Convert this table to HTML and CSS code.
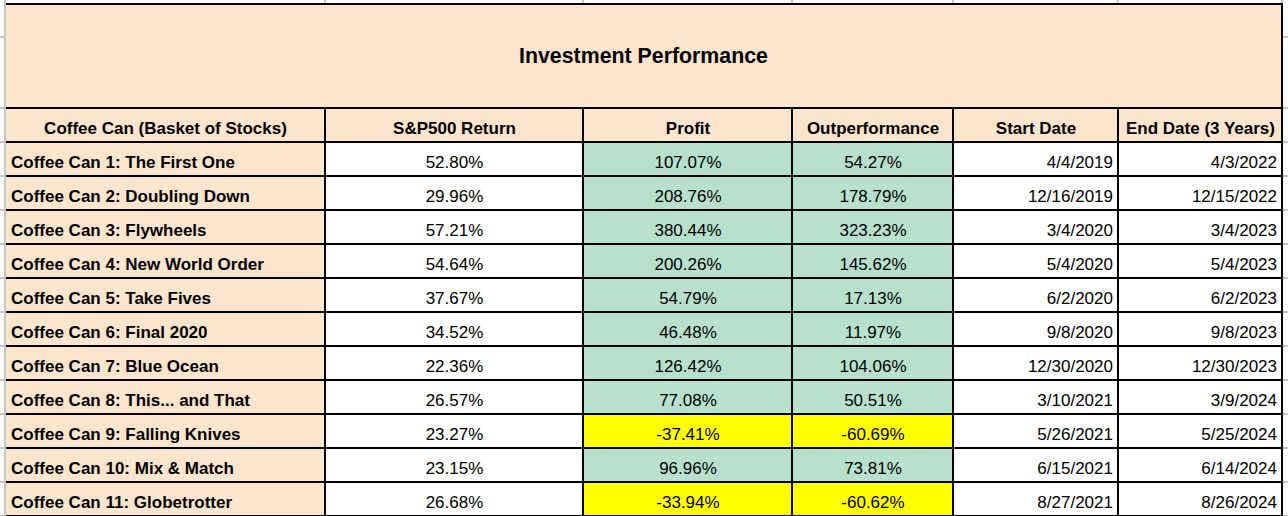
FILE: index.html
```html
<!DOCTYPE html>
<html lang="en">
<head>
<meta charset="utf-8">
<title>Investment Performance</title>
<link rel="stylesheet" href="styles.css">
</head>
<body>
<div class="page">
  <div class="gutter gutter-left"></div>
  <div class="gridline"></div>
  <div class="content">
    <div class="top-strip"></div>
    <div class="sheet">
      <div class="cell title">Investment Performance</div>

      <div class="cell head">Coffee Can (Basket of Stocks)</div>
      <div class="cell head">S&amp;P500 Return</div>
      <div class="cell head">Profit</div>
      <div class="cell head">Outperformance</div>
      <div class="cell head">Start Date</div>
      <div class="cell head">End Date (3 Years)</div>

      <div class="cell label">Coffee Can 1: The First One</div>
      <div class="cell num">52.80%</div>
      <div class="cell num good">107.07%</div>
      <div class="cell num good">54.27%</div>
      <div class="cell date">4/4/2019</div>
      <div class="cell date">4/3/2022</div>

      <div class="cell label">Coffee Can 2: Doubling Down</div>
      <div class="cell num">29.96%</div>
      <div class="cell num good">208.76%</div>
      <div class="cell num good">178.79%</div>
      <div class="cell date">12/16/2019</div>
      <div class="cell date">12/15/2022</div>

      <div class="cell label">Coffee Can 3: Flywheels</div>
      <div class="cell num">57.21%</div>
      <div class="cell num good">380.44%</div>
      <div class="cell num good">323.23%</div>
      <div class="cell date">3/4/2020</div>
      <div class="cell date">3/4/2023</div>

      <div class="cell label">Coffee Can 4: New World Order</div>
      <div class="cell num">54.64%</div>
      <div class="cell num good">200.26%</div>
      <div class="cell num good">145.62%</div>
      <div class="cell date">5/4/2020</div>
      <div class="cell date">5/4/2023</div>

      <div class="cell label">Coffee Can 5: Take Fives</div>
      <div class="cell num">37.67%</div>
      <div class="cell num good">54.79%</div>
      <div class="cell num good">17.13%</div>
      <div class="cell date">6/2/2020</div>
      <div class="cell date">6/2/2023</div>

      <div class="cell label">Coffee Can 6: Final 2020</div>
      <div class="cell num">34.52%</div>
      <div class="cell num good">46.48%</div>
      <div class="cell num good">11.97%</div>
      <div class="cell date">9/8/2020</div>
      <div class="cell date">9/8/2023</div>

      <div class="cell label">Coffee Can 7: Blue Ocean</div>
      <div class="cell num">22.36%</div>
      <div class="cell num good">126.42%</div>
      <div class="cell num good">104.06%</div>
      <div class="cell date">12/30/2020</div>
      <div class="cell date">12/30/2023</div>

      <div class="cell label">Coffee Can 8: This... and That</div>
      <div class="cell num">26.57%</div>
      <div class="cell num good">77.08%</div>
      <div class="cell num good">50.51%</div>
      <div class="cell date">3/10/2021</div>
      <div class="cell date">3/9/2024</div>

      <div class="cell label">Coffee Can 9: Falling Knives</div>
      <div class="cell num">23.27%</div>
      <div class="cell num bad">-37.41%</div>
      <div class="cell num bad">-60.69%</div>
      <div class="cell date">5/26/2021</div>
      <div class="cell date">5/25/2024</div>

      <div class="cell label">Coffee Can 10: Mix &amp; Match</div>
      <div class="cell num">23.15%</div>
      <div class="cell num good">96.96%</div>
      <div class="cell num good">73.81%</div>
      <div class="cell date">6/15/2021</div>
      <div class="cell date">6/14/2024</div>

      <div class="cell label">Coffee Can 11: Globetrotter</div>
      <div class="cell num">26.68%</div>
      <div class="cell num bad">-33.94%</div>
      <div class="cell num bad">-60.62%</div>
      <div class="cell date">8/27/2021</div>
      <div class="cell date">8/26/2024</div>
    </div>
  </div>
  <div class="gutter gutter-right"></div>
</div>
</body>
</html>
```

FILE: styles.css
```css
html, body {
  margin: 0;
  padding: 0;
  background: #ffffff;
}

body {
  font-family: "Liberation Sans", Arial, sans-serif;
  color: #000000;
  overflow: hidden;
}

.page {
  display: flex;
  align-items: stretch;
  width: 1288px;
  height: 516px;
  overflow: hidden;
}

.gutter {
  flex: none;
  background:
    linear-gradient(#c7c7c7, #c7c7c7) 0 36px / 100% 2px no-repeat,
    repeating-linear-gradient(to bottom, #c7c7c7 0 2px, transparent 2px 34px) 0 107px / 100% 100% no-repeat;
}

.gutter-left {
  width: 4px;
}

.gutter-right {
  flex: 1;
}

.gridline {
  flex: none;
  width: 2px;
  background: #c7c7c7;
}

.content {
  flex: none;
  display: flex;
  flex-direction: column;
}

.top-strip {
  flex: none;
  height: 3px;
  background:
    linear-gradient(#c7c7c7, #c7c7c7) 318px 0 / 2px 100% no-repeat,
    linear-gradient(#c7c7c7, #c7c7c7) 576px 0 / 2px 100% no-repeat,
    linear-gradient(#c7c7c7, #c7c7c7) 785px 0 / 2px 100% no-repeat,
    linear-gradient(#c7c7c7, #c7c7c7) 946px 0 / 2px 100% no-repeat,
    linear-gradient(#c7c7c7, #c7c7c7) 1111px 0 / 2px 100% no-repeat,
    linear-gradient(#c7c7c7, #c7c7c7) 1275px 0 / 2px 100% no-repeat;
}

.sheet {
  flex: none;
  display: grid;
  grid-template-columns: 318px 256px 207px 159px 163px 162px;
  grid-template-rows: 102px;
  grid-auto-rows: 32px;
  gap: 2px;
  padding: 2px 2px 2px 0;
  background: #000000;
}

.cell {
  display: flex;
  align-items: flex-end;
  padding: 0 4px 2px 5px;
  font-size: 17px;
  line-height: 20px;
  white-space: nowrap;
  overflow: hidden;
  background: #ffffff;
}

.title {
  grid-column: 1 / -1;
  align-items: center;
  justify-content: center;
  padding: 0;
  font-size: 21.33px;
  line-height: normal;
  font-weight: bold;
  background: #fce5cd;
}

.head {
  justify-content: center;
  font-weight: bold;
  background: #fce5cd;
}

.label {
  font-weight: bold;
  background: #fce5cd;
}

.num {
  justify-content: center;
}

.date {
  justify-content: flex-end;
}

.good {
  background: #b7e1cd;
}

.bad {
  background: #ffff00;
}
```
